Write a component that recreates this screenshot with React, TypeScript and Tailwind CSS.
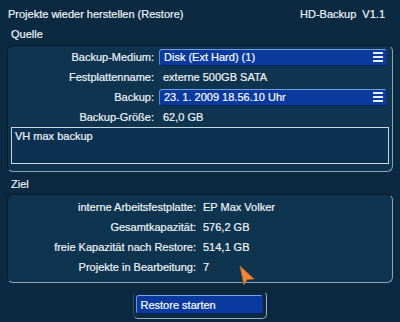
import React from "react";

function Menu() {
  return (
    <span className="flex flex-col gap-[2px] w-[10px]">
      <span className="h-[2px] bg-[#e8eef6]" />
      <span className="h-[2px] bg-[#e8eef6]" />
      <span className="h-[2px] bg-[#e8eef6]" />
    </span>
  );
}

function Select({ value }: { value: string }) {
  return (
    <div className="flex items-center justify-between h-[17px] w-[228px] pl-[4px] pr-[3px] rounded-[3px] bg-[#0a3a9e] border border-t-[#6f9fe0] border-l-[#5a8ad6] border-r-[#1a2f66] border-b-[#062464] text-white">
      <span>{value}</span>
      <Menu />
    </div>
  );
}

function Row({ label, children, w }: { label: string; children: React.ReactNode; w: string }) {
  return (
    <div className="flex items-center h-[20px]">
      <div className={`${w} text-right shrink-0`}>{label}</div>
      {children}
    </div>
  );
}

export default function App() {
  return (
    <div
      className="relative w-[400px] h-[322px] bg-[#0b2a42] text-[#eef3f7] text-[11px] leading-[14px] overflow-hidden [-webkit-text-stroke:0.2px_#eef3f7]"
      style={{ fontFamily: '"Liberation Sans", Arial, sans-serif' }}
    >
      <div className="flex justify-between pl-[8px] pr-[15px] pt-[7px] h-[27px]">
        <span>Projekte wieder herstellen (Restore)</span>
        <span>HD-Backup&nbsp;&nbsp;V1.1</span>
      </div>
      <div className="pl-[11px] h-[18px]">Quelle</div>

      {/* Quelle panel */}
      <div className="mx-[7px] h-[127px] rounded-[6px] bg-[#0e3450] border border-t-[#051a2c] border-l-[#051a2c] border-r-[#8aa2b6] border-b-[#8aa2b6] pt-[1px]">
        <Row label="Backup-Medium:" w="w-[151px] pr-[5px]">
          <Select value="Disk (Ext Hard) (1)" />
        </Row>
        <Row label="Festplattenname:" w="w-[151px] pr-[5px]">
          <span className="pl-[4px]">externe 500GB SATA</span>
        </Row>
        <Row label="Backup:" w="w-[151px] pr-[5px]">
          <Select value="23. 1. 2009 18.56.10 Uhr" />
        </Row>
        <Row label="Backup-Größe:" w="w-[151px] pr-[5px]">
          <span className="pl-[4px]">62,0 GB</span>
        </Row>
        <div className="ml-[3px] mr-[3px] h-[37px] border border-[#c8d6e0] bg-[#0c3150] pl-[3px] pt-[1px]">
          VH max backup
        </div>
      </div>

      <div className="pl-[11px] pt-[5px] h-[22px]">Ziel</div>

      {/* Ziel panel */}
      <div className="mx-[7px] h-[89px] rounded-[6px] bg-[#0e3450] border border-t-[#051a2c] border-l-[#051a2c] border-r-[#8aa2b6] border-b-[#8aa2b6] pt-[2px]">
        <Row label="interne Arbeitsfestplatte:" w="w-[195px] pr-[7px]">
          <span>EP Max Volker</span>
        </Row>
        <Row label="Gesamtkapazität:" w="w-[195px] pr-[7px]">
          <span>576,2 GB</span>
        </Row>
        <Row label="freie Kapazität nach Restore:" w="w-[195px] pr-[7px]">
          <span>514,1 GB</span>
        </Row>
        <Row label="Projekte in Bearbeitung:" w="w-[195px] pr-[7px]">
          <span>7</span>
        </Row>
      </div>

      <div className="flex justify-center mt-[8px] pr-[1px]">
        <div className="w-[134px] h-[28px] rounded-[5px] border border-t-[#0a2238] border-l-[#2a4a66] border-r-[#9ab0c2] border-b-[#9ab0c2] pl-[2px] pt-[3px]">
          <div className="w-[127px] h-[19px] rounded-[3px] bg-[#0a3aa0] border border-t-[#7aa6e6] border-l-[#6a96de] border-r-[#1a3270] border-b-[#062060] pl-[4px] flex items-center text-white">
            Restore starten
          </div>
        </div>
      </div>

      {/* cursor */}
      <svg className="absolute left-[238px] top-[264px]" width="18" height="22" viewBox="0 0 18 22">
        <path d="M2 2 L16 15 L9 15.5 L6 21 Z" fill="#f08a3a" stroke="#c0601a" strokeWidth="0.8" />
      </svg>
    </div>
  );
}
